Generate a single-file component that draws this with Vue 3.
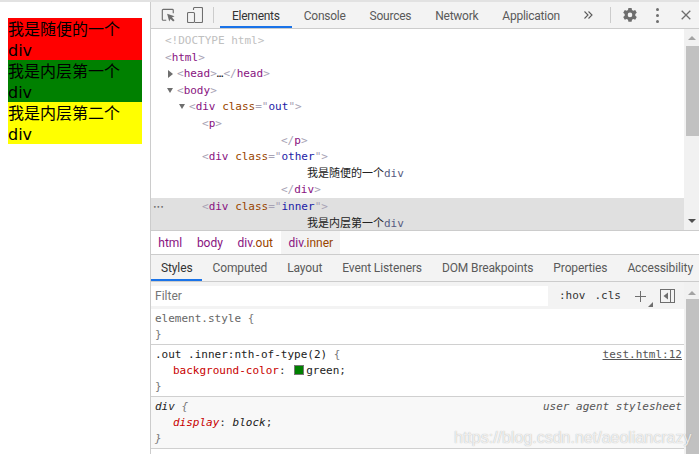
<script setup>
const mainTabs = ["Elements", "Console", "Sources", "Network", "Application"];
const styleTabs = ["Styles", "Computed", "Layout", "Event Listeners", "DOM Breakpoints", "Properties", "Accessibility"];

// each row: left offset in px, optional arrow, then coloured pieces
const rows = [
  { left: 14, parts: [["doctype", "<!DOCTYPE html>"]] },
  { left: 14, parts: [["br", "<"], ["tag", "html"], ["br", ">"]] },
  { left: 26, arrow: "closed", parts: [["br", "<"], ["tag", "head"], ["br", ">"], ["plain", "…"], ["br", "</"], ["tag", "head"], ["br", ">"]] },
  { left: 26, arrow: "open", parts: [["br", "<"], ["tag", "body"], ["br", ">"]] },
  { left: 38, arrow: "open", parts: [["br", "<"], ["tag", "div"], ["plain", " "], ["attr", "class"], ["br", "=\""], ["val", "out"], ["br", "\">"]] },
  { left: 51, parts: [["br", "<"], ["tag", "p"], ["br", ">"]] },
  { left: 130, parts: [["br", "</"], ["tag", "p"], ["br", ">"]] },
  { left: 51, parts: [["br", "<"], ["tag", "div"], ["plain", " "], ["attr", "class"], ["br", "=\""], ["val", "other"], ["br", "\">"]] },
  { left: 156, parts: [["text", "我是随便的一个"], ["tag2", "div"]] },
  { left: 130, parts: [["br", "</"], ["tag", "div"], ["br", ">"]] },
  { left: 51, selected: true, parts: [["br", "<"], ["tag", "div"], ["plain", " "], ["attr", "class"], ["br", "=\""], ["val", "inner"], ["br", "\">"]] },
  { left: 156, selected: true, parts: [["text", "我是内层第一个"], ["tag2", "div"]] },
];
</script>

<template>
  <div class="screen">
    <div class="page">
      <div class="out">
        <div class="box red">我是随便的一个div</div>
        <div class="box green">我是内层第一个div</div>
        <div class="box yellow">我是内层第二个div</div>
      </div>
    </div>

    <div class="devtools">
      <div class="toolbar">
        <svg class="tool first" width="14" height="14" viewBox="0 0 16 16">
          <path d="M6 14H2.500a1 1 0 0 1-1-1V2.500a1 1 0 0 1 1-1H13a1 1 0 0 1 1 1V6" fill="none" stroke="#6e6e6e" stroke-width="1.300" />
          <path d="M7 6.500l8.500 3-3 1.400 3 3-1.600 1.600-3-3L9.400 15.500z" fill="#6e6e6e" />
        </svg>
        <svg class="tool" width="16" height="16" viewBox="0 0 16 16">
          <path d="M6.500 3V1.500a1 1 0 0 1 1-1h7a1 1 0 0 1 1 1v13a1 1 0 0 1-1 1H8" fill="none" stroke="#6e6e6e" stroke-width="1.100" />
          <rect x="0.500" y="5.500" width="7" height="10" rx="1" fill="none" stroke="#6e6e6e" stroke-width="1.100" />
        </svg>
        <span class="sep"></span>
        <div v-for="(t, i) in mainTabs" :key="t" class="tab" :class="{ on: i === 0 }">{{ t }}</div>
        <svg class="more" width="9" height="8" viewBox="0 0 9 8">
          <path d="M.5.5L4 4 .5 7.500M4.500.5L8 4 4.500 7.500" fill="none" stroke="#5a5a5a" stroke-width="1.100" />
        </svg>
        <span class="sep sep2"></span>
        <svg class="gear" width="16" height="16" viewBox="0 0 16 16">
          <path fill-rule="evenodd" fill="#6e6e6e" d="M6.400 1h3.200l.4 2 1.300.7 1.900-.7 1.600 2.800-1.500 1.300v1.600l1.500 1.300-1.600 2.800-1.900-.7-1.300.7-.4 2H6.400l-.4-2-1.300-.7-1.900.7L1.200 10l1.500-1.300V7.100L1.200 5.800l1.600-2.800 1.900.7L6 3zM8 5.600a2.300 2.300 0 1 0 0 4.600 2.300 2.300 0 0 0 0-4.600z" />
        </svg>
        <span class="dots"><i></i><i></i><i></i></span>
        <svg class="close" width="10" height="10" viewBox="0 0 10 10">
          <path d="M.7.7l8.600 8.600M9.300.7L.7 9.300" stroke="#6e6e6e" stroke-width="1.300" />
        </svg>
      </div>

      <div class="tree-wrap">
        <div class="tree">
          <div v-for="(row, i) in rows" :key="i" class="row" :class="{ selected: row.selected }" :style="{ paddingLeft: row.left + 'px' }">
            <span v-if="i === 10" class="ellipsis">•••</span>
            <span v-if="row.arrow" class="arrow" :class="row.arrow"></span>
            <span v-for="(p, j) in row.parts" :key="j" :class="p[0]">{{ p[1] }}</span>
          </div>
        </div>
        <div class="scroll top-scroll">
          <span class="up"></span>
          <span class="thumb"></span>
          <span class="down"></span>
        </div>
      </div>

      <div class="crumbs">
        <span class="crumb tag">html</span>
        <span class="crumb tag">body</span>
        <span class="crumb"><span class="tag">div</span><span class="attr">.out</span></span>
        <span class="crumb cur"><span class="tag">div</span><span class="attr">.inner</span></span>
      </div>

      <div class="subtabs">
        <div v-for="(t, i) in styleTabs" :key="t" class="subtab" :class="{ on: i === 0 }">{{ t }}</div>
      </div>

      <div class="lower">
        <div class="styles">
          <div class="filter">
            <div class="input">Filter</div>
            <span class="btn hov">:hov</span>
            <span class="btn cls">.cls</span>
            <span class="plus"></span>
            <svg class="pane" width="15" height="14" viewBox="0 0 15 14">
              <rect x=".5" y=".5" width="14" height="13" fill="none" stroke="#6e6e6e" />
              <path d="M10.500 0v14" stroke="#6e6e6e" />
              <path d="M8 3.500v7L3.500 7z" fill="#6e6e6e" />
            </svg>
          </div>

          <div class="rule">
            <div><span class="sel">element.style</span> <span class="bracket">{</span></div>
            <div class="bracket">}</div>
          </div>

          <div class="rule">
            <a class="source">test.html:12</a>
            <div><span class="sel dark">.out .inner:nth-of-type(2)</span> <span class="bracket">{</span></div>
            <div class="decl"><span class="prop">background-color</span>: <span class="swatch"></span><span class="dark">green</span>;</div>
            <div class="bracket">}</div>
          </div>

          <div class="rule agent">
            <span class="source ua">user agent stylesheet</span>
            <div><span class="sel dark">div</span> <span class="bracket">{</span></div>
            <div class="decl"><span class="prop">display</span>: <span class="dark">block</span>;</div>
            <div class="bracket">}</div>
          </div>
        </div>
        <div class="scroll low-scroll">
          <span class="up"></span>
          <span class="thumb"></span>
        </div>
      </div>
    </div>

    <div class="watermark">https://blog.csdn.net/aeoliancrazy</div>
  </div>
</template>

<style>
html,
body {
  margin: 0;
  background: #fff;
}
</style>

<style scoped>
.screen {
  position: relative;
  display: flex;
  width: 699px;
  height: 454px;
  overflow: hidden;
  box-sizing: border-box;
  border-top: 2px solid #e2e2e2;
  font-family: Roboto, "Noto Sans CJK SC", sans-serif;
  background: #fff;
}

/* page on the left */
.page {
  width: 151px;
  flex: none;
  box-sizing: border-box;
  padding: 16px 8px 0;
  border-right: 1px solid #ccc;
}
.out {
  width: 134px;
}
.box {
  box-sizing: border-box;
  height: 42px;
  padding-top: 1px;
  font-family: "DejaVu Sans", "Noto Sans CJK SC", sans-serif;
  font-size: 16px;
  line-height: 21px;
  color: #000;
}
.red { background: #f00; }
.green { background: #008000; }
.yellow { background: #ff0; }

.devtools {
  flex: 1;
  min-width: 0;
  display: flex;
  flex-direction: column;
  font-size: 12px;
}

/* top toolbar */
.toolbar {
  height: 26px;
  flex: none;
  display: flex;
  align-items: center;
  background: #f3f3f3;
  border-bottom: 1px solid #ccc;
  color: #5a5a5a;
}
.tool {
  flex: none;
  margin-right: 12px;
}
.tool + .tool {
  margin-right: 10px;
}
.tool.first {
  margin-left: 10px;
}
.sep {
  width: 1px;
  height: 16px;
  background: #ccc;
  margin: 0 6px 0 0;
  flex: none;
}
.tab {
  height: 26px;
  line-height: 28px;
  box-sizing: border-box;
  padding: 0 12px;
  letter-spacing: -0.25px;
  white-space: nowrap;
  flex: none;
}
.tab.on {
  border-bottom: 2px solid #1a73e8;
  color: #333;
}
.more {
  margin-left: 12px;
  flex: none;
}
.sep2 {
  margin: 0 0 0 17px;
}
.gear {
  margin-left: 11px;
  flex: none;
}
.dots {
  display: flex;
  flex-direction: column;
  gap: 3px;
  margin-left: 18px;
}
.dots i {
  width: 3px;
  height: 3px;
  background: #6e6e6e;
  border-radius: 50%;
}
.close {
  margin-left: 22px;
  flex: none;
}

/* elements tree */
.tree-wrap {
  height: 201px;
  flex: none;
  display: flex;
  border-bottom: 1px solid #ccc;
  font-family: "DejaVu Sans Mono", "Noto Sans CJK SC", monospace;
  font-size: 11px;
}
.tree {
  flex: 1;
  min-width: 0;
  overflow: hidden;
  padding-top: 3px;
}
.row {
  position: relative;
  height: 16.6px;
  line-height: 18.6px;
  white-space: pre;
}
.row.selected {
  background: #e0e0e0;
}
.ellipsis {
  position: absolute;
  left: 2px;
  top: 0;
  font-size: 6px;
  color: #666;
}
.arrow {
  position: absolute;
  width: 0;
  height: 0;
}
.arrow.closed {
  margin-left: -9px;
  margin-top: 5px;
  border-left: 5px solid #6e6e6e;
  border-top: 4px solid transparent;
  border-bottom: 4px solid transparent;
}
.arrow.open {
  margin-left: -10px;
  margin-top: 6px;
  border-top: 5px solid #6e6e6e;
  border-left: 3.5px solid transparent;
  border-right: 3.5px solid transparent;
}
.doctype { color: #c0c0c0; }
.br { color: #a8a3b5; }
.tag { color: #881280; }
.tag2 { color: #555a80; }
.attr { color: #994500; }
.val { color: #1a1aa6; }
.plain { color: #222; }
.text { color: #222; }

.scroll {
  width: 15px;
  flex: none;
  position: relative;
  background: #f1f1f1;
}
.thumb {
  position: absolute;
  left: 2px;
  right: 0;
  background: #c1c1c1;
}
.up,
.down {
  position: absolute;
  left: 4px;
  width: 0;
  height: 0;
  border-left: 4px solid transparent;
  border-right: 4px solid transparent;
}
.up {
  top: 7px;
  border-bottom: 4px solid #a3a3a3;
}
.down {
  bottom: 7px;
  border-top: 4px solid #505050;
}
.top-scroll .thumb {
  top: 17px;
  height: 90px;
}

/* breadcrumbs */
.crumbs {
  height: 23px;
  flex: none;
  display: flex;
  line-height: 24px;
  border-bottom: 1px solid #ccc;
}
.crumb {
  padding: 0 7.3px;
  white-space: nowrap;
}
.crumb.cur {
  margin-left: 1px;
  background: #f3f3f3;
}

/* sidebar tabs */
.subtabs {
  height: 26px;
  flex: none;
  display: flex;
  background: #f3f3f3;
  border-bottom: 1px solid #ccc;
  color: #5a5a5a;
}
.subtab {
  height: 26px;
  line-height: 27px;
  box-sizing: border-box;
  padding: 0 10px;
  letter-spacing: -0.12px;
  white-space: nowrap;
  flex: none;
}
.subtab.on {
  border-bottom: 2px solid #1a73e8;
  color: #333;
}

.lower {
  flex: 1;
  min-height: 0;
  display: flex;
}
.styles {
  flex: 1;
  min-width: 0;
  font-family: "DejaVu Sans Mono", "Noto Sans CJK SC", monospace;
  font-size: 11px;
  line-height: 16px;
}
.filter {
  height: 27px;
  box-sizing: border-box;
  display: flex;
  align-items: center;
  background: #f3f3f3;
  padding-top: 1px;
}
.input {
  width: 393px;
  height: 20px;
  line-height: 21px;
  padding-left: 4px;
  background: #fff;
  font-family: Roboto, sans-serif;
  font-size: 12px;
  color: #757575;
}
.btn {
  color: #333;
}
.hov {
  margin-left: 11px;
}
.cls {
  margin-left: 9px;
}
.plus {
  position: relative;
  width: 11px;
  height: 11px;
  margin-left: 14px;
  background: linear-gradient(#6e6e6e, #6e6e6e) center / 11px 1px no-repeat,
    linear-gradient(#6e6e6e, #6e6e6e) center / 1px 11px no-repeat;
}
.plus::after {
  content: "";
  position: absolute;
  right: -7px;
  bottom: -5px;
  border-left: 5px solid transparent;
  border-bottom: 5px solid #6e6e6e;
}
.pane {
  margin-left: 14px;
  flex: none;
}
.rule {
  position: relative;
  padding: 2px 4px 1px;
  border-bottom: 1px solid #d0d0d0;
}
.rule.agent {
  background: #f8f8f8;
}
.sel {
  color: #666;
}
.sel.dark {
  color: #222;
}
.dark {
  color: #222;
}
.bracket {
  color: #777;
}
.decl {
  padding-left: 18px;
  color: #333;
}
.prop {
  color: #c80000;
}
.swatch {
  display: inline-block;
  width: 8px;
  height: 8px;
  margin: 0 2px 0 2px;
  background: #008000;
  border: 1px solid #777;
  vertical-align: -1px;
}
.source {
  position: absolute;
  right: 2px;
  top: 2px;
  color: #555;
  text-decoration: underline;
}
.source.ua {
  font-style: italic;
  text-decoration: none;
}
.agent .sel,
.agent .bracket,
.agent .prop,
.agent .dark {
  font-style: italic;
}
.low-scroll .up {
  top: 9px;
}
.low-scroll .thumb {
  top: 17px;
  bottom: 0;
}

.watermark {
  position: absolute;
  left: 454px;
  top: 426px;
  font-family: "Liberation Sans", sans-serif;
  font-size: 16px;
  line-height: 20px;
  white-space: nowrap;
  color: rgba(255, 255, 255, 0.8);
  text-shadow: 0 0 1px rgba(110, 110, 110, 0.6);
}
</style>
